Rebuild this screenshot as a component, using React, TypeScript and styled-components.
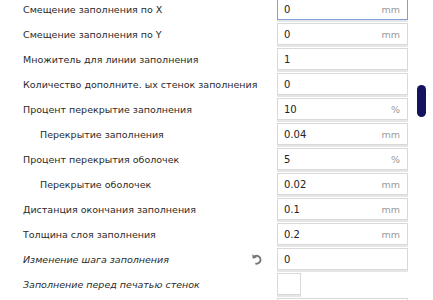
import React from 'react'
import styled, { createGlobalStyle } from 'styled-components'

const GlobalStyle = createGlobalStyle`
    html, body {
        margin: 0;
        padding: 0;
        background: #ffffff;
        overflow: hidden;
    }
    body {
        font-family: "DejaVu Sans", Verdana, sans-serif;
    }
`

const Panel = styled.div`
    position: relative;
    width: 433px;
    height: 300px;
    overflow: hidden;
`

const List = styled.div`
    display: flex;
    flex-direction: column;
    margin-top: -2px;
`

const Row = styled.div`
    display: grid;
    grid-template-columns: 277px 131px;
    height: 25px;
    align-items: start;
`

const Label = styled.div<{ $indent?: boolean; $italic?: boolean }>`
    display: flex;
    align-items: center;
    justify-content: space-between;
    height: 22px;
    padding-left: ${p => (p.$indent ? 40 : 23)}px;
    padding-right: 14px;
    font-size: 9.5px;
    color: #2a2a2a;
    font-style: ${p => (p.$italic ? 'italic' : 'normal')};
    white-space: nowrap;
`

const Field = styled.div<{ $focused?: boolean }>`
    box-sizing: border-box;
    display: flex;
    align-items: center;
    justify-content: space-between;
    height: 22px;
    padding: 0 7px 0 6px;
    background: #ffffff;
    border: 1px solid ${p => (p.$focused ? '#7f9fd6' : '#d9d9d9')};
    box-shadow: 0 2px 0 #e6e6e6;
    font-size: 10px;
    color: #222;
`

const Unit = styled.span`
    font-size: 9.5px;
    color: #9a9a9a;
`

const CheckBox = styled.div`
    box-sizing: border-box;
    width: 24px;
    height: 22px;
    border: 1px solid #d9d9d9;
    box-shadow: 0 2px 0 #e6e6e6;
    background: #fff;
`

const ScrollThumb = styled.div`
    position: absolute;
    left: 417px;
    top: 85px;
    width: 9px;
    height: 32px;
    border-radius: 5px;
    background: #13135e;
`

const UndoIcon = () => (
    <svg width="11" height="12" viewBox="0 0 10 11" fill="none">
        <path d="M2.2 3.2 A3.6 3.6 0 1 1 3 9.6" stroke="#777" strokeWidth="1.7" fill="none" />
        <path d="M0.2 1.2 L0.6 5.2 L4.4 4.2 Z" fill="#777" />
    </svg>
)

type Item = {
    label: string
    value?: string
    unit?: string
    indent?: boolean
    italic?: boolean
    focused?: boolean
    undo?: boolean
    checkbox?: boolean
}

const items: Item[] = [
    { label: 'Смещение заполнения по X', value: '0', unit: 'mm', focused: true },
    { label: 'Смещение заполнения по Y', value: '0', unit: 'mm' },
    { label: 'Множитель для линии заполнения', value: '1' },
    { label: 'Количество дополните. ых стенок заполнения', value: '0' },
    { label: 'Процент перекрытие заполнения', value: '10', unit: '%' },
    { label: 'Перекрытие заполнения', value: '0.04', unit: 'mm', indent: true },
    { label: 'Процент перекрытия оболочек', value: '5', unit: '%' },
    { label: 'Перекрытие оболочек', value: '0.02', unit: 'mm', indent: true },
    { label: 'Дистанция окончания заполнения', value: '0.1', unit: 'mm' },
    { label: 'Толщина слоя заполнения', value: '0.2', unit: 'mm' },
    { label: 'Изменение шага заполнения', value: '0', italic: true, undo: true },
    { label: 'Заполнение перед печатью стенок', italic: true, checkbox: true },
    { label: '', value: '' },
]

function App() {
    return (
        <Panel>
            <GlobalStyle />
            <List>
                {items.map((it, i) => (
                    <Row key={i}>
                        <Label $indent={it.indent} $italic={it.italic}>
                            <span>{it.label}</span>
                            {it.undo && <UndoIcon />}
                        </Label>
                        {it.checkbox ? (
                            <CheckBox />
                        ) : (
                            <Field $focused={it.focused}>
                                <span>{it.value}</span>
                                {it.unit && <Unit>{it.unit}</Unit>}
                            </Field>
                        )}
                    </Row>
                ))}
            </List>
            <ScrollThumb />
        </Panel>
    )
}

export default App
